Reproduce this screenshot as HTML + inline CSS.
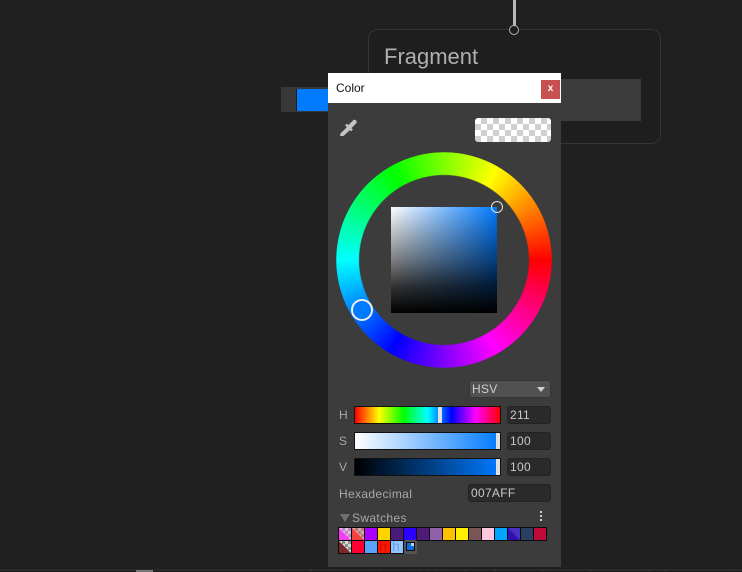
<!DOCTYPE html>
<html>
<head>
<meta charset="utf-8">
<style>
html,body{margin:0;padding:0;background:#202020;}
body{width:742px;height:572px;position:relative;overflow:hidden;font-family:"Liberation Sans",sans-serif;color:#b4b4b4;}
.a{position:absolute;box-sizing:border-box;}
.t{position:absolute;white-space:nowrap;font-size:12px;line-height:14px;color:#b4b4b4;}
.fld{position:absolute;box-sizing:border-box;background:#2a2a2a;border:1px solid #232323;border-radius:3px;font-size:12px;line-height:16px;padding-left:2px;color:#cacaca;letter-spacing:.3px;}
.sl{position:absolute;box-sizing:border-box;left:354px;width:147px;height:18px;border:1px solid #111;}
.th{position:absolute;width:4px;height:16px;top:0;background:#e0e0e0;}
.sw{position:absolute;width:14px;height:14px;box-sizing:border-box;border:1px solid #0a0a0a;overflow:hidden;margin-left:-1px;}
.h{position:absolute;left:1px;top:-3px;font-size:14px;line-height:16px;}
.tk{position:absolute;top:570px;width:1px;height:1px;background:#505050;}
</style>
</head>
<body>
<!-- graph node -->
<div class="a" style="left:513px;top:0;width:3px;height:26px;background:#b8b8b8;"></div>
<div class="a" style="left:368px;top:29px;width:293px;height:115px;border:1px solid #353535;border-radius:10px;background:#1e1e1e;"></div>
<div class="a" style="left:509px;top:25px;width:10px;height:10px;border:1.5px solid #b4b4b4;border-radius:50%;background:#1e1e1e;"></div>
<div class="t" style="left:384px;top:44px;font-size:22px;line-height:26px;color:#b0b0b0;">Fragment</div>
<div class="a" style="left:540px;top:79px;width:101px;height:42px;background:#3b3b3b;"></div>
<div class="a" style="left:281px;top:87px;width:60px;height:25px;background:#383838;"></div>
<div class="a" style="left:296px;top:89px;width:40px;height:22px;background:#007aff;border-left:1px solid #1a1a1a;"></div>

<!-- panel -->
<div class="a" style="left:328px;top:73px;width:233px;height:494px;background:#3c3c3c;"></div>
<div class="a" style="left:328px;top:73px;width:233px;height:30px;background:#fff;"></div>
<div class="t" style="left:336px;top:81px;color:#111;">Color</div>
<div class="a" style="left:541px;top:80px;width:19px;height:19px;background:#c75050;color:#fff;font-size:10px;font-weight:bold;line-height:18px;text-align:center;">x</div>

<!-- eyedropper -->
<svg class="a" style="left:338px;top:118px;" width="20" height="20" viewBox="0 0 20 20">
<path d="M2 18 L2.5 15.5 L9.5 8.5 L12.5 11.5 L5.5 18 Z" fill="#c4c4c4"/>
<path d="M8 6.5 L14 12.5" stroke="#c4c4c4" stroke-width="2.6"/>
<path d="M12 8.5 L16.5 4" stroke="#c4c4c4" stroke-width="4.4" stroke-linecap="round"/>
</svg>

<!-- preview -->
<div class="a" style="left:475px;top:118px;width:76px;height:24px;border-radius:3px;background:repeating-conic-gradient(#cfcfcf 0 25%,#fff 0 50%) 0 0/12px 12px;"></div>

<!-- wheel -->
<div class="a" style="left:336px;top:152px;width:216px;height:216px;border-radius:50%;background:conic-gradient(from 90deg,#f00,#f0f,#00f,#0ff,#0f0,#ff0,#f00);-webkit-mask:radial-gradient(circle closest-side,transparent 84.5px,#000 85.5px,#000 107.5px,transparent 108px);mask:radial-gradient(circle closest-side,transparent 84.5px,#000 85.5px,#000 107.5px,transparent 108px);"></div>
<div class="a" style="left:351px;top:299px;width:22px;height:22px;border:2px solid #f0f0f0;border-radius:50%;background:#007aff;"></div>

<!-- sv square -->
<div class="a" style="left:391px;top:207px;width:106px;height:106px;background:linear-gradient(to bottom,rgba(0,0,0,0),rgba(0,0,0,.5) 50%,rgba(0,0,0,.8) 75%,#000),linear-gradient(to right,#fff,#007aff);"></div>
<div class="a" style="left:491px;top:201px;width:12px;height:12px;border:1px solid #e4e4e4;border-radius:50%;"></div>

<!-- dropdown -->
<div class="a" style="left:469px;top:380px;width:82px;height:18px;background:#515151;border:1px solid #363636;border-radius:3px;"></div>
<div class="t" style="left:472px;top:382px;color:#d0d0d0;letter-spacing:.3px;">HSV</div>
<div class="a" style="left:537px;top:387px;width:0;height:0;border-left:4.5px solid transparent;border-right:4.5px solid transparent;border-top:5px solid #d0d0d0;"></div>

<!-- sliders -->
<div class="t" style="left:339px;top:408px;color:#a8a8a8;">H</div>
<div class="sl" style="top:406px;background:linear-gradient(to right,#f00,#ff0 16.67%,#0f0 33.33%,#0ff 50%,#00f 66.67%,#f0f 83.33%,#f00);"><div class="th" style="left:83px;"></div></div>
<div class="fld" style="left:507px;top:406px;width:44px;height:18px;">211</div>

<div class="t" style="left:339px;top:434px;color:#a8a8a8;">S</div>
<div class="sl" style="top:432px;background:linear-gradient(to right,#fff,#007aff);"><div class="th" style="left:141px;"></div></div>
<div class="fld" style="left:507px;top:432px;width:44px;height:18px;">100</div>

<div class="t" style="left:339px;top:460px;color:#a8a8a8;">V</div>
<div class="sl" style="top:458px;background:linear-gradient(to right,#000,#007aff);"><div class="th" style="left:141px;"></div></div>
<div class="fld" style="left:507px;top:458px;width:44px;height:18px;">100</div>

<div class="t" style="left:339px;top:487px;letter-spacing:.35px;color:#a8a8a8;">Hexadecimal</div>
<div class="fld" style="left:468px;top:484px;width:83px;height:18px;">007AFF</div>

<!-- swatches -->
<div class="a" style="left:340px;top:514px;width:0;height:0;border-left:5px solid transparent;border-right:5px solid transparent;border-top:8px solid #6f6f6f;"></div>
<div class="t" style="left:352px;top:511px;letter-spacing:.35px;color:#a8a8a8;">Swatches</div>
<div class="a" style="left:540px;top:511px;width:2px;height:2px;background:#d0d0d0;box-shadow:0 4px 0 #d0d0d0,0 8px 0 #d0d0d0;"></div>

<div class="sw" style="left:339px;top:527px;background:#f53df5;"><svg width="12" height="12" style="display:block"><path d="M0 0H12V12Z" fill="#e4bce4"/><path d="M3 0h3v3H3zM9 0h3v3H9zM6 3h3v3H6zM9 6h3v3H9z" fill="#b888c0"/></svg></div>
<div class="sw" style="left:352px;top:527px;background:#f54040;"><svg width="12" height="12" style="display:block"><path d="M0 0H12V12Z" fill="#d8a8a8"/><path d="M3 0h3v3H3zM9 0h3v3H9zM6 3h3v3H6zM9 6h3v3H9z" fill="#b87878"/></svg></div>
<div class="sw" style="left:365px;top:527px;background:#aa00ff;"></div>
<div class="sw" style="left:378px;top:527px;background:#ffd500;"></div>
<div class="sw" style="left:391px;top:527px;background:#4a1a7a;"></div>
<div class="sw" style="left:404px;top:527px;background:#2a00ff;"></div>
<div class="sw" style="left:417px;top:527px;background:#4f1a7a;"></div>
<div class="sw" style="left:430px;top:527px;background:#9060a8;"></div>
<div class="sw" style="left:443px;top:527px;background:#ffc000;"></div>
<div class="sw" style="left:456px;top:527px;background:#fff000;"></div>
<div class="sw" style="left:469px;top:527px;background:#7a5555;"></div>
<div class="sw" style="left:482px;top:527px;background:#ffc8e0;"></div>
<div class="sw" style="left:495px;top:527px;background:#00a5ff;"></div>
<div class="sw" style="left:508px;top:527px;background:#3010b0;"><svg width="12" height="12" style="display:block"><path d="M0 0H12V12Z" fill="#4a30c0"/></svg></div>
<div class="sw" style="left:521px;top:527px;background:#2a4060;"></div>
<div class="sw" style="left:534px;top:527px;background:#c00a3a;"></div>

<div class="sw" style="left:339px;top:540px;background:#7a2a2a;"><svg width="12" height="12" style="display:block"><path d="M0 0H12V12Z" fill="#d8d8d8"/><path d="M3 0h3v3H3zM9 0h3v3H9zM6 3h3v3H6zM9 6h3v3H9z" fill="#909090"/></svg></div>
<div class="sw" style="left:352px;top:540px;background:#ff0030;"></div>
<div class="sw" style="left:365px;top:540px;background:#55a5ff;"></div>
<div class="sw" style="left:378px;top:540px;background:#ff1500;"><span class="h" style="color:#c81000;">h</span></div>
<div class="sw" style="left:391px;top:540px;background:#90c5ff;"><span class="h" style="color:#6a9fdc;">h</span></div>
<div class="a" style="left:404px;top:540px;width:13px;height:14px;background:#555;border-radius:2px;"></div>
<div class="a" style="left:406px;top:542px;width:9px;height:9px;border:1px solid #0a0a0a;background:#0a6fe0;"><div style="position:absolute;right:0;top:0;width:3px;height:3px;background:#ccc;"></div></div>

<!-- bottom strip -->
<div class="a" style="left:0;top:569px;width:742px;height:3px;background:#2a2a2a;"></div>
<div class="a" style="left:0;top:571px;width:742px;height:1px;background:#1c1c1c;"></div>
<div class="a" style="left:136px;top:570px;width:17px;height:2px;background:#777;"></div>
<div class="tk" style="left:281px"></div><div class="tk" style="left:311px"></div><div class="tk" style="left:333px"></div><div class="tk" style="left:373px"></div><div class="tk" style="left:379px"></div><div class="tk" style="left:410px"></div><div class="tk" style="left:420px"></div><div class="tk" style="left:428px"></div><div class="tk" style="left:436px"></div><div class="tk" style="left:442px"></div><div class="tk" style="left:465px"></div><div class="tk" style="left:495px"></div><div class="tk" style="left:542px"></div><div class="tk" style="left:549px"></div><div class="tk" style="left:590px"></div><div class="tk" style="left:642px"></div><div class="tk" style="left:649px"></div><div class="tk" style="left:665px"></div><div class="tk" style="left:733px"></div>
</body>
</html>
